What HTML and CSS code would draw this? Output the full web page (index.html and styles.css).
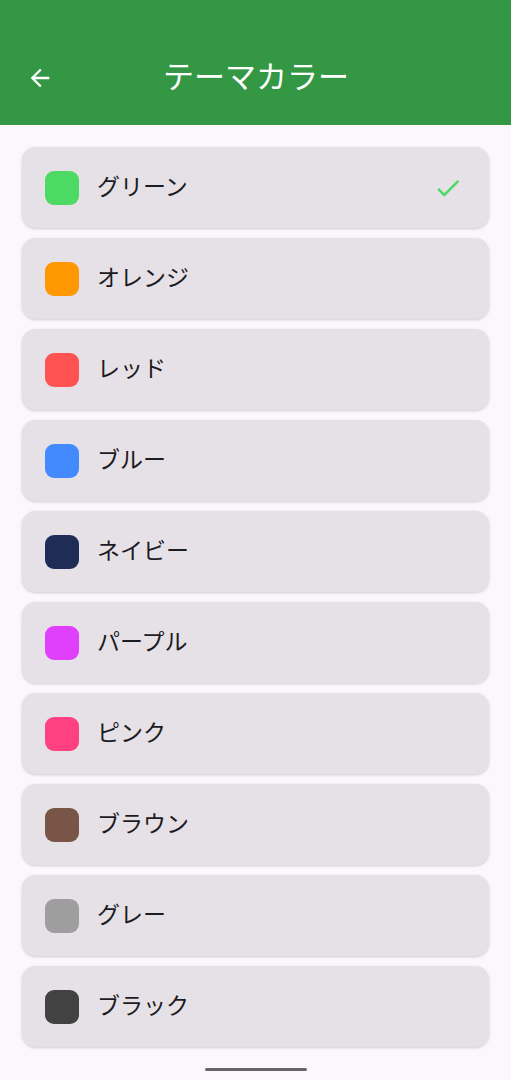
FILE: index.html
```html
<!DOCTYPE html>
<html lang="ja">
<head>
  <meta charset="UTF-8">
  <title>テーマカラー</title>
  <link rel="stylesheet" href="styles.css">
</head>
<body>

  <div class="appbar">
    <button class="back" aria-label="戻る">
      <svg width="28" height="28" viewBox="0 0 24 24"><path d="M20 11H7.83l5.59-5.59L12 4l-8 8 8 8 1.41-1.41L7.83 13H20v-2z" fill="#fff"/></svg>
    </button>
    <h1>テーマカラー</h1>
  </div>

  <div class="list">
    <div class="item">
      <span class="swatch green"></span>
      <span class="label">グリーン</span>
      <svg class="check" width="30" height="30" viewBox="0 0 24 24"><path d="M9 16.17L4.83 12l-1.42 1.41L9 19 21 7l-1.41-1.41z" fill="#4cd964"/></svg>
    </div>
    <div class="item"><span class="swatch orange"></span><span class="label">オレンジ</span></div>
    <div class="item"><span class="swatch red"></span><span class="label">レッド</span></div>
    <div class="item"><span class="swatch blue"></span><span class="label">ブルー</span></div>
    <div class="item"><span class="swatch navy"></span><span class="label">ネイビー</span></div>
    <div class="item"><span class="swatch purple"></span><span class="label">パープル</span></div>
    <div class="item"><span class="swatch pink"></span><span class="label">ピンク</span></div>
    <div class="item"><span class="swatch brown"></span><span class="label">ブラウン</span></div>
    <div class="item"><span class="swatch grey"></span><span class="label">グレー</span></div>
    <div class="item"><span class="swatch black"></span><span class="label">ブラック</span></div>
  </div>

  <div class="home-bar"></div>

</body>
</html>
```

FILE: styles.css
```css
body {
  margin: 0;
  font-family: "Noto Sans CJK JP", Roboto, sans-serif;
  background: #fcf7fc;
  color: #1c1b1f;
  height: 1080px;
  overflow: hidden;
}

.appbar {
  height: 125px;
  background: #349744;
  display: flex;
  align-items: flex-end;
  box-sizing: border-box;
  padding: 0 0 23px 16px;
}

.back {
  background: none;
  border: none;
  padding: 0;
  width: 48px;
  height: 48px;
  display: flex;
  align-items: center;
  justify-content: center;
}

.appbar h1 {
  margin: 0 0 3px 99px;
  font-size: 31px;
  font-weight: 400;
  color: #fff;
  line-height: 48px;
}

.list {
  padding: 22px 22px 0;
  display: flex;
  flex-direction: column;
  gap: 10px;
}

.item {
  height: 81px;
  background: #e6e1e6;
  border-radius: 14px;
  box-shadow: 0 1px 3px rgba(0,0,0,0.18);
  display: flex;
  align-items: center;
  padding: 0 26px 0 23px;
  box-sizing: border-box;
}

.swatch {
  width: 34px;
  height: 34px;
  border-radius: 9px;
  flex: none;
}

.label {
  margin: 0 0 5px 18px;
  font-size: 23px;
  line-height: 30px;
  flex: 1;
}

.check {
  flex: none;
}

.green  { background: #4cd964; }
.orange { background: #ff9800; }
.red    { background: #ff5252; }
.blue   { background: #448aff; }
.navy   { background: #1f2d56; }
.purple { background: #e040fb; }
.pink   { background: #ff4081; }
.brown  { background: #795548; }
.grey   { background: #9e9e9e; }
.black  { background: #424242; }

.home-bar {
  width: 102px;
  height: 3px;
  border-radius: 2px;
  background: #666;
  margin: 21px auto 0;
}
```
